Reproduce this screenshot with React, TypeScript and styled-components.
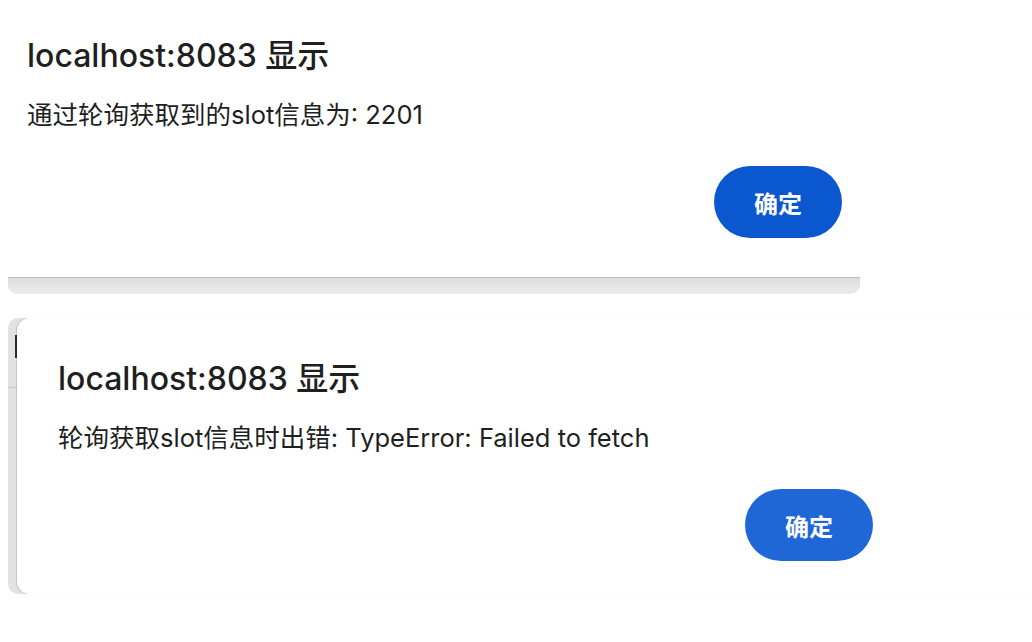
import React from 'react'
import styled, { createGlobalStyle } from 'styled-components'

const GlobalStyle = createGlobalStyle`
  html, body {
    margin: 0;
    padding: 0;
    background: #ffffff;
  }
  body {
    font-family: Inter, "Noto Sans CJK SC", sans-serif;
    color: #1f1f1f;
  }
`

const Page = styled.div`
  width: 1032px;
  height: 642px;
  overflow: hidden;
  background: #ffffff;
  display: flex;
  flex-direction: column;
`

const TopDialog = styled.div`
  width: 860px;
  height: 277px;
  box-sizing: border-box;
  padding: 37px 0 0 27px;
  background: #ffffff;
`

// edge of the window sitting under the first dialog
const UnderEdge = styled.div`
  margin-left: 8px;
  width: 852px;
  height: 17px;
  border-radius: 0 0 9px 9px;
  border-top: 1px solid #bdbdbd;
  box-sizing: border-box;
  background: linear-gradient(to bottom, #dedede, #ececec);
`

const BackWindow = styled.div`
  margin: 24px 0 0 8px;
  height: 276px;
  display: flex;
  border-radius: 10px 0 0 10px;
  background: linear-gradient(to right, #e2e2e2, #f1f1f1);
`

const BackStrip = styled.div`
  width: 9px;
  flex-shrink: 0;
  display: flex;
  flex-direction: column;
  align-items: flex-end;
`

const StripMark = styled.div`
  margin-top: 17px;
  width: 2px;
  height: 23px;
  background: #2e2e2e;
`

const StripRule = styled.div`
  margin-top: 29px;
  width: 100%;
  height: 1px;
  background: #cbcbcb;
`

const Card = styled.div`
  flex: 1;
  box-sizing: border-box;
  padding: 42px 0 0 41px;
  background: #ffffff;
  border-radius: 13px 0 0 13px;
  box-shadow: -1px 0 1px rgba(0, 0, 0, 0.14);
`

const Content = styled.div`
  width: 815px;
  display: flex;
  flex-direction: column;
`

const Title = styled.h2`
  margin: 0;
  font-size: 32px;
  line-height: 38px;
  font-weight: 500;
  color: #1f1f1f;
`

const Message = styled.p`
  margin: 23px 0 0;
  font-size: 25.5px;
  line-height: 34px;
  font-weight: 400;
  color: #1f1f1f;
`

const Actions = styled.div`
  margin-top: 34px;
  display: flex;
  justify-content: flex-end;
`

const OkButton = styled.button<{ $tone: string }>`
  width: 128px;
  height: 72px;
  border: none;
  border-radius: 36px;
  background: ${(p) => p.$tone};
  color: #ffffff;
  font-family: Inter, "Noto Sans CJK SC", sans-serif;
  font-size: 24px;
  font-weight: 700;
  cursor: pointer;
`

type AlertProps = {
  host: string
  message: string
  tone: string
}

function AlertBody({ host, message, tone }: AlertProps) {
  return (
    <Content>
      <Title>{host} 显示</Title>
      <Message>{message}</Message>
      <Actions>
        <OkButton $tone={tone}>确定</OkButton>
      </Actions>
    </Content>
  )
}

export default function App() {
  return (
    <>
      <GlobalStyle />
      <Page>
        <TopDialog>
          <AlertBody
            host="localhost:8083"
            message="通过轮询获取到的slot信息为: 2201"
            tone="#0b57d0"
          />
        </TopDialog>
        <UnderEdge />
        <BackWindow>
          <BackStrip>
            <StripMark />
            <StripRule />
          </BackStrip>
          <Card>
            <AlertBody
              host="localhost:8083"
              message="轮询获取slot信息时出错: TypeError: Failed to fetch"
              tone="#1f67d6"
            />
          </Card>
        </BackWindow>
      </Page>
    </>
  )
}
